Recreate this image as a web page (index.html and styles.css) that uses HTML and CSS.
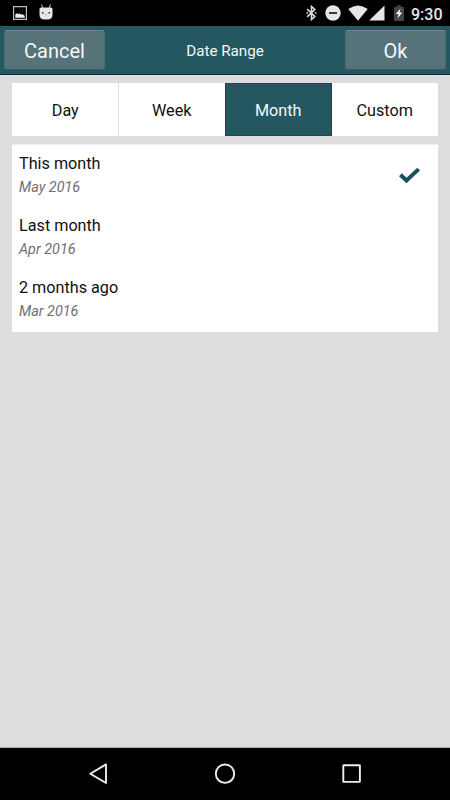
FILE: index.html
```html
<!DOCTYPE html>
<html lang="en">
<head>
<meta charset="utf-8">
<title>Date Range</title>
<link rel="stylesheet" href="styles.css">
</head>
<body>
<div class="status">
  <svg class="picture" width="14" height="14" viewBox="0 0 14 14"><path fill="none" stroke="#bbb" stroke-width="1.200" d="M.6.6h12.800v12.800H.6z"/><path fill="#eee" d="M2.300 11.700V8.500L4 7.200l1.500 1 1-1L8 8.700l1-.8 2.700 1.800v2z"/></svg>
  <svg class="android" width="14" height="16" viewBox="0 0 14 16"><path stroke="#ccc" stroke-width="1" d="M2.500.5l1.500 4M11.500.5l-1.500 4"/><path fill="#e6e6e6" d="M.5 5q0-1.500 1.500-1.500h10q1.500 0 1.500 1.500v5.500q0 5-5 5h-3q-5 0-5-5z"/><path fill="#333" d="M3 8h1.500v1.500H3zM9.500 8H11v1.500H9.500z"/><path stroke="#aaa" stroke-width=".6" d="M6 10.500h2"/></svg>
  <span class="spacer"></span>
  <svg class="bluetooth" width="11" height="16" viewBox="0 0 11 16"><path fill="none" stroke="#ddd" stroke-width="1.600" d="M1.200 4.200l7.600 7.300-3.300 3V1.500l3.300 3-7.600 7.300"/><path fill="#ddd" d="M.5 7.200h1.600v1.600H.5zM8.900 7.200h1.600v1.600H8.900z"/></svg>
  <svg class="dnd" width="16" height="16" viewBox="0 0 16 16"><circle cx="8" cy="8" r="7.700" fill="#e6e6e6"/><path fill="#111" d="M4 7.200h8v1.600H4z"/></svg>
  <svg class="wifi" width="20" height="16" viewBox="0 0 20 16"><path fill="#e6e6e6" d="M.3 4Q10-3 19.700 4L10 15.700z"/></svg>
  <svg class="signal" width="16" height="16" viewBox="0 0 16 16"><path fill="#e6e6e6" d="M15.500.4v15.200H.2z"/></svg>
  <svg class="battery" width="10" height="16" viewBox="0 0 10 16"><path fill="#444" d="M0 2h3V.2h4V2h3v14H0z"/><path fill="#fff" d="M6.500 3.500L1.800 9h2.800L3.500 13.500 8.200 7.500H5.500z"/></svg>
  <span class="time">9:30</span>
</div>
<header class="bar">
  <button class="action">Cancel</button>
  <h1 class="title">Date Range</h1>
  <button class="action">Ok</button>
</header>
<main class="content">
  <nav class="tabs">
    <button class="tab">Day</button>
    <button class="tab">Week</button>
    <button class="tab selected">Month</button>
    <button class="tab">Custom</button>
  </nav>
  <ul class="list">
    <li class="row">
      <div><div class="name">This month</div><div class="sub">May 2016</div></div>
      <svg class="check" width="22" height="17" viewBox="0 0 22 17"><path fill="none" stroke="#1b4f5b" stroke-width="4" stroke-linejoin="miter" d="M2.400 7.700l6.100 5.800L20.700 2.100"/></svg>
    </li>
    <li class="row"><div><div class="name">Last month</div><div class="sub">Apr 2016</div></div></li>
    <li class="row"><div><div class="name">2 months ago</div><div class="sub">Mar 2016</div></div></li>
  </ul>
</main>
<footer class="navbar">
  <svg width="22" height="22" viewBox="0 0 22 22"><path fill="none" stroke="#eee" stroke-width="1.900" stroke-linejoin="round" d="M18 1.400v18.600L2.300 10.700z"/></svg>
  <svg width="22" height="22" viewBox="0 0 22 22"><circle cx="11" cy="10.700" r="9.200" fill="none" stroke="#eee" stroke-width="1.900"/></svg>
  <svg width="22" height="22" viewBox="0 0 22 22"><rect x="2.300" y="2.300" width="16.600" height="16.600" rx=".5" fill="none" stroke="#eee" stroke-width="1.900"/></svg>
</footer>
</body>
</html>
```
FILE: styles.css
```css
* { box-sizing: border-box; }
body {
  margin: 0;
  width: 450px;
  height: 800px;
  display: flex;
  flex-direction: column;
  background: #ddd;
  font-family: Roboto, sans-serif;
  color: #111;
  overflow: hidden;
}
button {
  border: 0;
  margin: 0;
  padding: 0;
  font: inherit;
  color: inherit;
}
svg { display: block; flex: none; }
.status {
  height: 26px;
  flex: none;
  display: flex;
  align-items: center;
  padding: 0 8px 0 13px;
  background: #000;
}
.android { margin: -2px 0 0 12px; }
.spacer { flex: 1; }
.dnd { margin-left: 8px; }
.wifi { margin-left: 7px; }
.signal { margin-left: 1px; }
.battery { margin-left: 9px; }
.time {
  width: 31px;
  margin-left: 7px;
  font-size: 16px;
  font-weight: 500;
  line-height: 26px;
  padding-top: 3px;
  color: #e6e6e6;
  white-space: nowrap;
}
.bar {
  height: 49px;
  flex: none;
  display: flex;
  justify-content: space-between;
  padding: 4px 4px 0;
  background: #255760;
  border-bottom: 1px solid #062d3a;
  color: #f3f7f8;
}
.action {
  width: 101px;
  height: 40px;
  background: #557379;
  border: 1px solid #486a70;
  border-top-color: #68858a;
  border-bottom-color: #345960;
  border-radius: 2px;
  font-size: 20px;
  padding-top: 2px;
}
.title {
  margin: 0;
  font-size: 15.200px;
  font-weight: 400;
  line-height: 42px;
}
.content {
  flex: 1;
  padding: 8px 12px 0;
  border-bottom: 1px solid #aaa;
}
.tabs {
  display: grid;
  grid-template-columns: repeat(4, 1fr);
  height: 53px;
  background: #fff;
}
.tab {
  background: #fff;
  font-size: 16.200px;
  padding-top: 2px;
}
.tab:first-child { border-right: 1px solid #ddd; padding-left: 1px; }
.tab.selected {
  background: #255760;
  border: 1px solid #0c4c57;
  color: #f3f7f8;
}
.list {
  list-style: none;
  margin: 8px 0 0;
  padding: 0;
  height: 188px;
  background: #fff;
  border-top: 1px solid #eee;
}
.row {
  height: 62px;
  padding: 8px 18px 0 7px;
  display: flex;
  justify-content: space-between;
}
.name { font-size: 16.200px; line-height: 22px; }
.sub {
  margin-top: 3px;
  font-size: 14.400px;
  line-height: 20px;
  font-style: italic;
  color: #707070;
}
.check { margin-top: 14px; }
.navbar {
  height: 52px;
  flex: none;
  display: flex;
  justify-content: center;
  align-items: center;
  gap: 104.500px;
  background: #000;
}
```
